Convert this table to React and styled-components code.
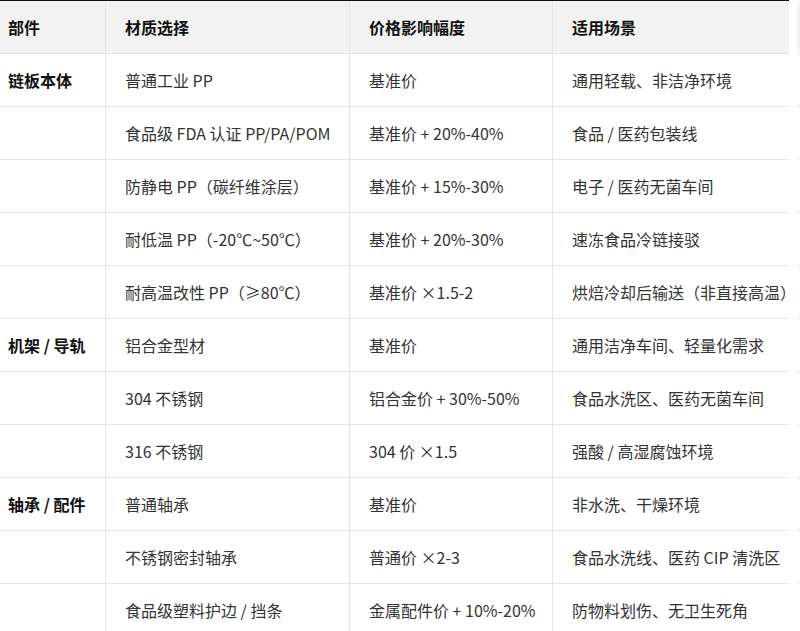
import React from 'react';
import styled, { createGlobalStyle } from 'styled-components';

const GlobalStyle = createGlobalStyle`
  body {
    margin: 0;
    background: #fff;
    font-family: "Noto Sans CJK SC", "Noto Sans", sans-serif;
  }
`;

const Page = styled.div`
  display: flex;
  gap: 8px;
  width: 800px;
  height: 631px;
  overflow: hidden;
`;

const Table = styled.div`
  width: 789px;
  flex-shrink: 0;
  border-top: 1px solid #111;
`;

const Row = styled.div`
  display: grid;
  grid-template-columns: 106px 244px 203px 236px;
  height: 53px;
`;

const Cell = styled.div`
  box-sizing: border-box;
  display: flex;
  align-items: center;
  padding-left: ${p => (p.first ? '8px' : '19px')};
  border-bottom: 1px solid #e6e6e6;
  border-right: ${p => (p.last ? 'none' : '1px solid #e6e6e6')};
  background: ${p => (p.head ? '#f2f2f2' : '#fff')};
  font-size: 16px;
  white-space: nowrap;
  color: ${p => (p.head || p.first ? '#111' : '#333')};
  font-weight: ${p => (p.head || p.first ? 700 : 400)};
`;

const Peek = styled.div`
  flex: 1;
  margin-top: 1px;
`;

const PeekCell = styled.div`
  box-sizing: border-box;
  height: 53px;
  border-bottom: 1px solid #e6e6e6;
  background: ${p => (p.head ? '#f2f2f2' : '#fff')};
`;

const head = ['部件', '材质选择', '价格影响幅度', '适用场景'];

const rows = [
  ['链板本体', '普通工业 PP', '基准价', '通用轻载、非洁净环境'],
  ['', '食品级 FDA 认证 PP/PA/POM', '基准价 + 20%-40%', '食品 / 医药包装线'],
  ['', '防静电 PP（碳纤维涂层）', '基准价 + 15%-30%', '电子 / 医药无菌车间'],
  ['', '耐低温 PP（-20℃~50℃）', '基准价 + 20%-30%', '速冻食品冷链接驳'],
  ['', '耐高温改性 PP（≥80℃）', '基准价 ×1.5-2', '烘焙冷却后输送（非直接高温）'],
  ['机架 / 导轨', '铝合金型材', '基准价', '通用洁净车间、轻量化需求'],
  ['', '304 不锈钢', '铝合金价 + 30%-50%', '食品水洗区、医药无菌车间'],
  ['', '316 不锈钢', '304 价 ×1.5', '强酸 / 高湿腐蚀环境'],
  ['轴承 / 配件', '普通轴承', '基准价', '非水洗、干燥环境'],
  ['', '不锈钢密封轴承', '普通价 ×2-3', '食品水洗线、医药 CIP 清洗区'],
  ['', '食品级塑料护边 / 挡条', '金属配件价 + 10%-20%', '防物料划伤、无卫生死角'],
];

export default function App() {
  return (
    <>
      <GlobalStyle />
      <Page>
        <Table>
          <Row>
            {head.map((h, i) => (
              <Cell key={h} head first={i === 0} last={i === 3}>{h}</Cell>
            ))}
          </Row>
          {rows.map((r, ri) => (
            <Row key={ri}>
              {r.map((c, i) => (
                <Cell key={i} first={i === 0} last={i === 3}>{c}</Cell>
              ))}
            </Row>
          ))}
        </Table>
        <Peek>
          <PeekCell head />
          {rows.map((_, i) => <PeekCell key={i} />)}
        </Peek>
      </Page>
    </>
  );
}
